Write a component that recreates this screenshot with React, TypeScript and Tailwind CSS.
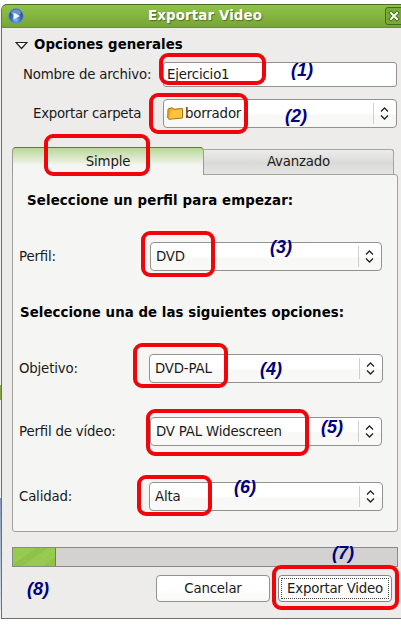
import React from "react";

function Arrows() {
  return (
    <div className="my-[3px] flex w-[23px] shrink-0 items-center justify-center border-l border-[#cfcfcd]">
      <svg width="9" height="13" viewBox="0 0 9 13" fill="none" stroke="#222" strokeWidth="1.3" className="-ml-px">
        <path d="M1 4.5 4.5 1 8 4.5M1 8.5 4.5 12 8 8.5" />
      </svg>
    </div>
  );
}

function Combo({ children, className }: { children: React.ReactNode; className: string }) {
  return (
    <div className={"flex h-[29px] shrink-0 rounded-[4px] border border-[#92928f] bg-linear-to-b from-white from-50% to-[#f8f8f7] to-55% " + className}>
      <div className="flex flex-1 items-center whitespace-nowrap">{children}</div>
      <Arrows />
    </div>
  );
}

function Ring({ className }: { className: string }) {
  return <div className={"absolute rounded-[9px] border-4 border-[#f0060a] " + className} />;
}

function Mark({ n, className }: { n: number; className: string }) {
  return (
    <span className={"absolute font-['Liberation_Sans',sans-serif] text-[18px] leading-[20px] font-bold tracking-normal text-[#000080] italic " + className}>
      ({n})
    </span>
  );
}

export default function App() {
  return (
    <div className="relative h-[632px] w-[401px] overflow-hidden bg-white font-['DejaVu_Sans',sans-serif] text-[13.33px] leading-4 tracking-[-0.18px] text-[#1a1a1a] [font-feature-settings:'liga'_1]">
      <div className="flex h-[619px] pt-1">
        <div className="flex w-px shrink-0 flex-col bg-[#f2f2f2] pt-[381px]">
          <div className="h-[15px] bg-[#86a650]" />
          <div className="mt-[98px] h-[112px] bg-linear-to-b from-[#8399b4] to-[#dde5ee]" />
        </div>
        <div className="flex min-w-0 flex-1 flex-col rounded-tl-[6px] border-b border-l border-[#6c6e70] bg-[#edeceb]">
          <header className="flex h-6 shrink-0 items-center rounded-tl-[5px] border-y border-t-[#4b6e22] border-b-[#65912f] bg-linear-to-b from-[#90c348] to-[#77a535] pl-[6px]">
            <svg width="16" height="16" viewBox="0 0 16 16">
              <defs>
                <radialGradient id="orb" cx="50%" cy="75%">
                  <stop offset="0" stopColor="#8dc4f5" />
                  <stop offset=".55" stopColor="#3b77c5" />
                  <stop offset="1" stopColor="#2a55a0" />
                </radialGradient>
              </defs>
              <circle cx="8" cy="8" r="7.4" fill="url(#orb)" stroke="#6d98c9" strokeWidth=".8" />
              <ellipse cx="8" cy="4.5" rx="5" ry="3" fill="#a8cdf2" opacity=".5" />
              <path d="M5.5 4.5 12 8l-6.5 3.5z" fill="#f3f9ff" />
            </svg>
            <h1 className="ml-[124px] flex-1 font-bold tracking-[0.15px] whitespace-nowrap text-white [text-shadow:1px_1px_1px_#4e731f]">Exportar Video</h1>
            <svg width="16" height="18" viewBox="0 0 16 18" fill="none" className="shrink-0">
              <path d="M17 .5H3Q.5.5.5 3v12q0 2.500 2.500 2.500h14" fill="#7aa93a" stroke="#426b20" />
              <path d="m6 6 6 6m0-6-6 6" stroke="#476f20" strokeWidth="4" strokeLinecap="square" />
              <path d="m6 6 6 6m0-6-6 6" stroke="#f4faeb" strokeWidth="2" strokeLinecap="square" />
            </svg>
          </header>

          <div className="mt-[9px] flex h-4 items-center pl-[13px]">
            <svg width="13" height="9" viewBox="0 0 13 9" className="mr-[6px]">
              <path d="M1 1.500h11L6.500 7.500z" fill="#fff" stroke="#222" strokeWidth="1.200" />
            </svg>
            <h2 className="font-bold tracking-[0.05px] text-black">Opciones generales</h2>
          </div>

          <div className="mt-[9px] flex h-[25px] items-center">
            <span className="w-[161px] pl-[21px] whitespace-nowrap">Nombre de archivo:</span>
            <div className="flex h-full w-[234px] items-center rounded-[3px] border border-[#92928f] bg-white pl-[3px]">Ejercicio1</div>
          </div>
          <div className="mt-3 flex items-center">
            <span className="w-[161px] pl-[31px] tracking-[-0.28px] whitespace-nowrap">Exportar carpeta</span>
            <Combo className="w-[234px]">
              <svg width="17" height="13" viewBox="0 0 17 13" className="mr-[1px] ml-[3px]">
                <path d="M1 2 5 .7l2 1.500 8.500-.7v9.500L2 12.300.7 11z" fill="#f4a81b" stroke="#a97413" />
                <path d="M4 3.500 15 2.500v8L2.500 11.500z" fill="#ffc43b" />
              </svg>
              borrador
            </Combo>
          </div>

          <div className="mt-[19px] ml-[10px] flex h-[27px] items-end">
            <div className="z-10 flex h-7 w-[192px] items-center justify-center self-start rounded-t-[4px] border border-b-0 border-[#9a9a97] border-t-[#5b7b33] bg-linear-to-b from-[#b9d793] to-[#f5f5f3] to-65%">Simple</div>
            <div className="flex h-[25px] w-[190px] items-center justify-center rounded-tr-[3px] border border-b-0 border-l-0 border-[#a5a5a3] bg-linear-to-b from-[#ebebea] via-[#dadad8] via-55% to-[#e4e4e2]">Avanzado</div>
          </div>
          <section className="ml-[10px] flex h-[358px] w-[386px] shrink-0 flex-col rounded-b-[3px] rounded-tr-[3px] border border-[#a1a19e] bg-[#f5f5f3]">
            <h2 className="mt-[18px] ml-[14px] font-bold tracking-[0.14px] text-black">Seleccione un perfil para empezar:</h2>
            <div className="mt-[33px] flex items-center pl-[6px]">
              <span className="w-[131px]">Perfil:</span>
              <Combo className="w-[232px] pl-[5px]">DVD</Combo>
            </div>
            <h2 className="mt-[34px] ml-[7px] font-bold tracking-[0.06px] whitespace-nowrap text-black">Seleccione una de las siguientes opciones:</h2>
            <div className="mt-[33px] flex items-center pl-[6px]">
              <span className="w-[130px]">Objetivo:</span>
              <Combo className="w-[234px] pl-[5px]">DVD-PAL</Combo>
            </div>
            <div className="mt-[34px] flex items-center pl-[6px]">
              <span className="w-[131px]">Perfil de vídeo:</span>
              <Combo className="w-[232px] pl-[5px]">DV PAL Widescreen</Combo>
            </div>
            <div className="mt-9 flex items-center pl-[6px]">
              <span className="w-[130px]">Calidad:</span>
              <Combo className="w-[234px] pl-[5px]">Alta</Combo>
            </div>
          </section>

          <div className="mt-[15px] ml-[10px] h-5 w-[386px] shrink-0 border border-[#898987] bg-[#d3d2d0]">
            <div className="h-full w-[43px] border-r border-[#668e2f] bg-[linear-gradient(145deg,#97cb50_32%,#8fc249_36%_50%,#97cb50_54%_80%,#8fc249_84%)]" />
          </div>
          <div className="mt-2 flex gap-2 pl-[154px]">
            <button className="h-[27px] w-[114px] rounded-[4px] border border-[#92928f] bg-linear-to-b from-white from-50% to-[#f8f8f7] tracking-[-0.18px]">Cancelar</button>
            <button className="h-[27px] w-[114px] rounded-[4px] border border-[#858583] bg-linear-to-b from-white from-50% to-[#f8f8f7] p-[2px] tracking-[-0.22px]">
              <span className="flex h-full items-center justify-center border border-dotted border-[#444] whitespace-nowrap">Exportar Video</span>
            </button>
          </div>
        </div>
      </div>

      <div className="pointer-events-none absolute inset-0 z-20">
        <Ring className="top-[53px] left-[159px] h-8 w-[107px]" />
        <Ring className="top-[93px] left-[149px] h-[41px] w-[99px]" />
        <Ring className="top-[134px] left-[44px] h-[42px] w-[106px]" />
        <Ring className="top-[231px] left-[141px] h-[46px] w-[74px]" />
        <Ring className="top-[343px] left-[133px] h-[45px] w-[95px]" />
        <Ring className="top-[409px] left-[146px] h-[47px] w-[163px]" />
        <Ring className="top-[475px] left-[137px] h-[41px] w-[75px]" />
        <Ring className="top-[565px] left-[272px] h-[45px] w-[127px]" />
        <Mark n={1} className="top-[60px] left-[291px]" />
        <Mark n={2} className="top-[106px] left-[285px]" />
        <Mark n={3} className="top-[237px] left-[270px]" />
        <Mark n={4} className="top-[359px] left-[260px]" />
        <Mark n={5} className="top-[417px] left-[321px]" />
        <Mark n={6} className="top-[477px] left-[234px]" />
        <Mark n={7} className="top-[543px] left-[332px]" />
        <Mark n={8} className="top-[579px] left-[27px]" />
      </div>
    </div>
  );
}
